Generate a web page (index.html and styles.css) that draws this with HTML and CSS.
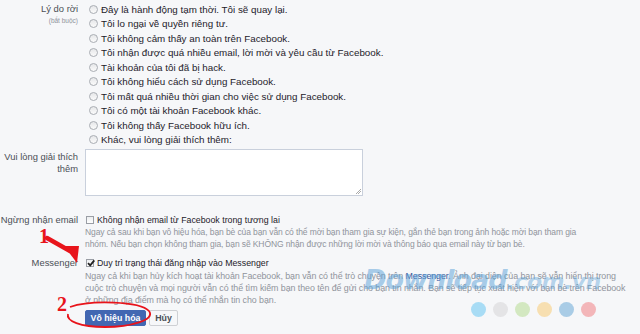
FILE: index.html
```html
<!DOCTYPE html>
<html lang="vi">
<head>
<meta charset="utf-8">
<link rel="stylesheet" href="styles.css">
</head>
<body>
<div class="page">
  <div class="form">
    <div class="row">
      <div class="label">Lý do rời<span class="req">(bắt buộc)</span></div>
      <div class="content">
        <ul class="options">
          <li><span class="radio"></span>Đây là hành động tạm thời. Tôi sẽ quay lại.</li>
          <li><span class="radio"></span>Tôi lo ngại về quyền riêng tư.</li>
          <li><span class="radio"></span>Tôi không cảm thấy an toàn trên Facebook.</li>
          <li><span class="radio"></span>Tôi nhận được quá nhiều email, lời mời và yêu cầu từ Facebook.</li>
          <li><span class="radio"></span>Tài khoản của tôi đã bị hack.</li>
          <li><span class="radio"></span>Tôi không hiểu cách sử dụng Facebook.</li>
          <li><span class="radio"></span>Tôi mất quá nhiều thời gian cho việc sử dụng Facebook.</li>
          <li><span class="radio"></span>Tôi có một tài khoản Facebook khác.</li>
          <li><span class="radio"></span>Tôi không thấy Facebook hữu ích.</li>
          <li><span class="radio"></span>Khác, vui lòng giải thích thêm:</li>
        </ul>
      </div>
    </div>
    <div class="row row-explain">
      <div class="label label-wrap">Vui lòng giải thích thêm</div>
      <div class="content">
        <div class="textarea"><span class="grip"></span></div>
      </div>
    </div>
    <div class="row row-email">
      <div class="label nowrap">Ngừng nhận email</div>
      <div class="content">
        <div class="check-line"><span class="checkbox"></span>Không nhận email từ Facebook trong tương lai</div>
        <p class="desc desc-email">Ngay cả sau khi bạn vô hiệu hóa, bạn bè của bạn vẫn có thể mời bạn tham gia sự kiện, gắn thẻ bạn trong ảnh hoặc mời bạn tham gia nhóm. Nếu bạn chọn không tham gia, bạn sẽ KHÔNG nhận được những lời mời và thông báo qua email này từ bạn bè.</p>
      </div>
    </div>
    <div class="row row-messenger">
      <div class="label nowrap">Messenger</div>
      <div class="content">
        <div class="check-line"><span class="checkbox checked"><svg viewBox="0 0 10 10" width="10" height="10"><path d="M2 5.2 L4.2 7.4 L8.3 2.4" fill="none" stroke="#222" stroke-width="1.8"/></svg></span>Duy trì trạng thái đăng nhập vào Messenger</div>
        <p class="desc desc-msg">Ngay cả khi bạn hủy kích hoạt tài khoản Facebook, bạn vẫn có thể trò chuyện trên <span class="link">Messenger</span>. Ảnh đại diện của bạn sẽ vẫn hiển thị trong cuộc trò chuyện và mọi người vẫn có thể tìm kiếm bạn theo tên để gửi cho bạn tin nhắn. Bạn sẽ tiếp tục xuất hiện với bạn bè trên Facebook ở những địa điểm mà họ có thể nhắn tin cho bạn.</p>
        <div class="buttons">
          <button class="btn btn-primary">Vô hiệu hóa</button>
          <button class="btn btn-cancel">Hủy</button>
        </div>
      </div>
    </div>
  </div>

  <div class="watermark">Download<span class="wm-tail">.com.vn</span></div>
  <div class="dots">
    <span class="dot d1"></span><span class="dot d2"></span><span class="dot d3"></span><span class="dot d4"></span><span class="dot d5"></span><span class="dot d6"></span>
  </div>

  <div class="num num1">1</div>
  <div class="num num2">2</div>
  <svg class="annot" width="640" height="334" viewBox="0 0 640 334">
    <path d="M47 238 L70 251" stroke="#e8141b" stroke-width="4.5" stroke-linecap="round" fill="none"/>
    <polygon points="64,246 79,246 77,263" fill="#e8141b"/>
    <path d="M70 307 C 90 300, 140 301, 149 311 C 156 320, 130 327, 105 327 C 80 327, 66 321, 68 314" fill="none" stroke="#e8141b" stroke-width="1.8"/>
  </svg>
</div>
</body>
</html>
```

FILE: styles.css
```css
html, body {
  margin: 0;
  padding: 0;
  background: #f6f7f9;
}
.page {
  position: relative;
  width: 640px;
  height: 334px;
  overflow: hidden;
  background: #f6f7f9;
  font-family: "Liberation Sans", Arial, sans-serif;
  color: #1d2129;
}
.form {
  padding-top: 2px;
  display: flex;
  flex-direction: column;
}
.row {
  display: grid;
  grid-template-columns: 78px 547px;
  column-gap: 7px;
}
.label {
  text-align: right;
  color: #4b4f56;
  font-size: 9.4px;
  line-height: 14.5px;
}
.nowrap {
  white-space: nowrap;
  display: flex;
  justify-content: flex-end;
}
.req {
  display: block;
  font-size: 6.5px;
  line-height: 8px;
  color: #90949c;
}
.options {
  list-style: none;
  margin: 0;
  padding: 0 0 0 4px;
}
.options li {
  display: flex;
  align-items: center;
  height: 14.5px;
  font-size: 9.8px;
  color: #1d2129;
}
.radio {
  width: 7px;
  height: 7px;
  border-radius: 50%;
  border: 1px solid #a9adb3;
  background: linear-gradient(#e6e7e9, #fbfbfb);
  margin-right: 3px;
  flex: none;
}
.row-explain {
  margin-top: 2px;
}
.label-wrap {
  line-height: 12px;
  padding-top: 2px;
}
.textarea {
  position: relative;
  width: 276px;
  height: 45px;
  background: #fff;
  border: 1px solid #c9d0dc;
  box-sizing: content-box;
}
.grip {
  position: absolute;
  right: 1px;
  bottom: 1px;
  width: 5px;
  height: 5px;
  background: linear-gradient(135deg, transparent 45%, #aaa 45%, #aaa 55%, transparent 55%, transparent 70%, #aaa 70%, #aaa 80%, transparent 80%);
}
.row-email {
  margin-top: 17px;
}
.row-email .label, .row-messenger .label {
  line-height: 14px;
}
.check-line {
  display: flex;
  align-items: center;
  height: 14px;
  font-size: 8.8px;
  color: #1d2129;
}
.checkbox {
  width: 6px;
  height: 6px;
  border: 1px solid #9a9ea5;
  background: linear-gradient(#eceef0, #fff);
  margin: 0 3px 0 1px;
  flex: none;
  position: relative;
}
.checkbox svg {
  position: absolute;
  left: -1px;
  top: -2px;
}
.desc {
  margin: 0;
  font-size: 8.9px;
  line-height: 12px;
  color: #90949c;
}
.desc-email {
  font-size: 8.5px;
  letter-spacing: -0.1px;
  max-width: 505px;
  line-height: 11.5px;
}
.desc-msg {
  letter-spacing: -0.07px;
  max-width: 547px;
}
.link {
  color: #365899;
}
.row-messenger {
  margin-top: 6px;
}
.buttons {
  display: flex;
  gap: 3px;
  margin-top: 4px;
}
.btn {
  font-family: "Liberation Sans", Arial, sans-serif;
  font-weight: bold;
  font-size: 8.8px;
  height: 16px;
  padding: 0;
  border-radius: 2px;
  line-height: 14px;
  white-space: nowrap;
}
.btn-primary {
  width: 61px;
  background: #4267b2;
  border: 1px solid #4267b2;
  color: #fff;
}
.btn-cancel {
  width: 29px;
  background: #f6f7f9;
  border: 1px solid #ced0d4;
  color: #4b4f56;
}
.watermark {
  position: absolute;
  left: 364px;
  top: 264px;
  font-family: "DejaVu Sans", sans-serif;
  font-weight: bold;
  font-style: italic;
  font-size: 27px;
  letter-spacing: -1px;
  color: rgba(88, 160, 215, 0.5);
  line-height: 32px;
}
.wm-tail {
  font-size: 22px;
  letter-spacing: -0.5px;
  color: rgba(88, 160, 215, 0.42);
}
.dots {
  position: absolute;
  left: 471px;
  top: 302px;
  display: flex;
  gap: 7px;
}
.dot {
  width: 15px;
  height: 15px;
  border-radius: 50%;
}
.d1 { background: #a8dcf5; }
.d2 { background: #e4e4e6; }
.d3 { background: #d3e8c1; }
.d4 { background: #f7dfb1; }
.d5 { background: #a9cce6; }
.d6 { background: #f3b6b9; }
.num {
  position: absolute;
  font-family: "Liberation Serif", "Times New Roman", serif;
  font-weight: bold;
  color: #e8141b;
  font-size: 20px;
  line-height: 20px;
}
.num1 { left: 39px; top: 226px; }
.num2 { left: 57px; top: 294px; }
.annot {
  position: absolute;
  left: 0;
  top: 0;
  pointer-events: none;
}
```
